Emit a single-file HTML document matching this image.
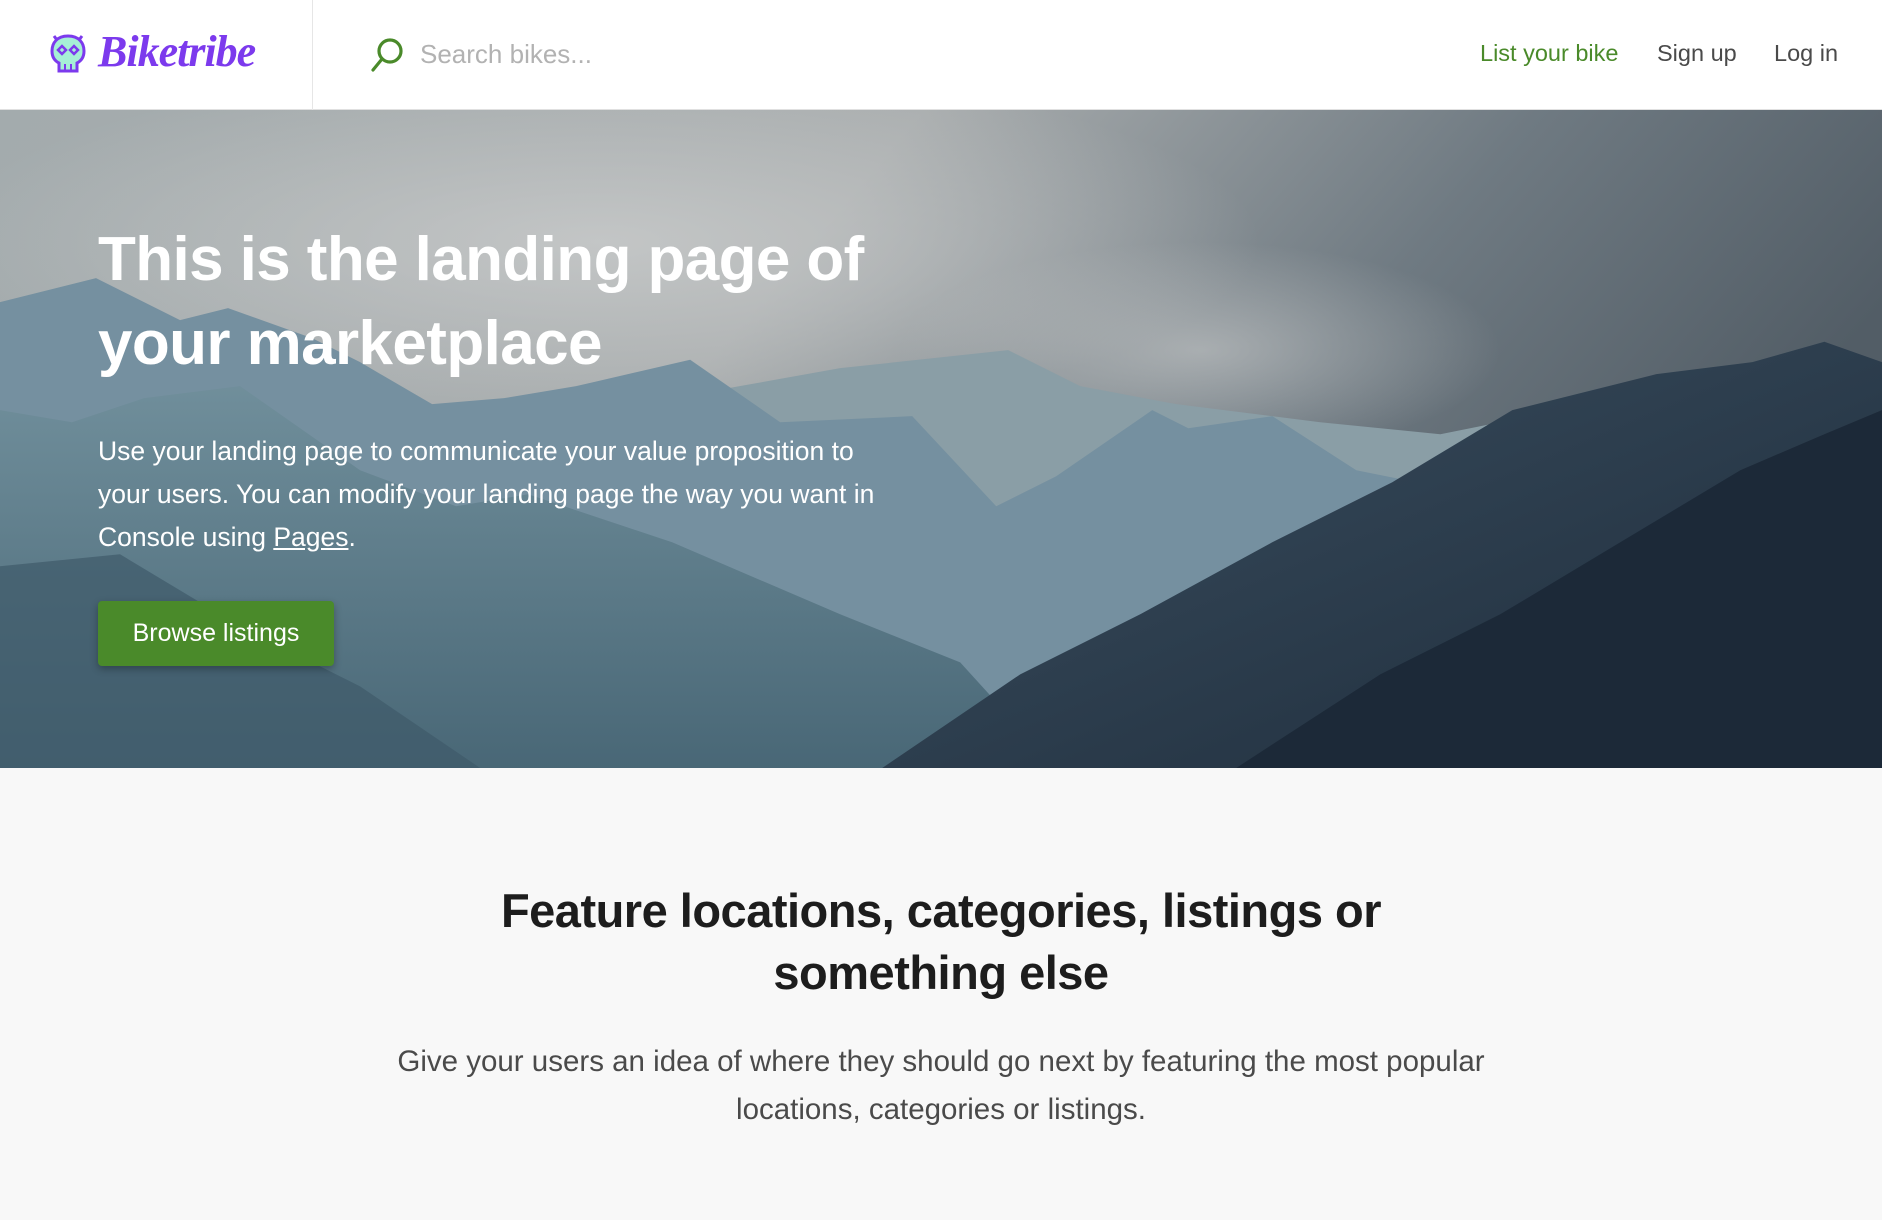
<!DOCTYPE html>
<html><head><meta charset="utf-8"><style>
*{margin:0;padding:0;box-sizing:border-box}
body{width:1882px;height:1220px;overflow:hidden;background:#f8f8f8;font-family:"Liberation Sans",sans-serif;position:relative}
.hdr{position:absolute;left:0;top:0;width:1882px;height:110px;background:#fff;border-bottom:1px solid #e0e0e0}
.div{position:absolute;left:312px;top:0;width:1px;height:110px;background:#e6e6e6}
.logo{position:absolute;left:98px;top:26px;font-family:"Liberation Serif",serif;font-style:italic;font-weight:bold;font-size:44px;color:#7c3aed;letter-spacing:-1px}
.search{position:absolute;left:420px;top:39px;font-size:26px;color:#b2b2b2}
.nav{position:absolute;top:40px;font-size:23.5px;color:#4a4a4a}
.hero{position:absolute;left:0;top:110px;width:1882px;height:658px;overflow:hidden}
h1{position:absolute;left:98px;color:#fff;font-size:62px;line-height:84px;font-weight:bold;letter-spacing:-.6px;width:900px}
.p{position:absolute;left:98px;color:#fff;font-size:26.5px;line-height:43px;width:810px}
.btn{position:absolute;left:98px;width:236px;height:65px;background:#4a8a2a;border-radius:4px;color:#fff;font-size:25px;text-align:center;line-height:65px;box-shadow:0 3px 8px rgba(0,0,0,.3)}
h2{position:absolute;left:0;width:1882px;top:880px;text-align:center;font-size:47px;line-height:62px;color:#1d1d1d;font-weight:bold;letter-spacing:-.5px}
.sub{position:absolute;left:0;width:1882px;top:1038px;text-align:center;font-size:29.5px;line-height:48px;color:#4a4a4a}
</style></head><body>
<div class="hdr">
<svg style="position:absolute;left:48px;top:32px" width="40" height="44" viewBox="0 0 40 44"><path d="M6 4l3 4M34 4l-3 4" stroke="#7c3aed" stroke-width="3"/><path d="M20 4C9 4 4 11 4 19c0 6 3 10 7 12v8h18v-8c4-2 7-6 7-12C36 11 31 4 20 4z" fill="#a6f0d6" stroke="#7c3aed" stroke-width="3"/><path d="M10 18l4-4 4 4-4 4zM22 18l4-4 4 4-4 4z" fill="none" stroke="#7c3aed" stroke-width="2.5"/><path d="M17 32v7M23 32v7" stroke="#7c3aed" stroke-width="2"/></svg>
<div class="logo">Biketribe</div>
<div class="div"></div>
<svg style="position:absolute;left:370px;top:37px" width="34" height="36" viewBox="0 0 34 36"><circle cx="20" cy="14" r="11" fill="none" stroke="#4a8a2a" stroke-width="3.2"/><path d="M12 22L3 33" stroke="#4a8a2a" stroke-width="3.2" stroke-linecap="round"/></svg>
<div class="search">Search bikes...</div>
<div class="nav" style="left:1480px;color:#4a8a2a">List your bike</div>
<div class="nav" style="left:1657px">Sign up</div>
<div class="nav" style="left:1774px">Log in</div>
</div>
<div class="hero">
<svg width="1882" height="658" viewBox="0 0 1568 548" preserveAspectRatio="none">
<defs><linearGradient id="sky" x1="0" y1="0" x2="1" y2="0.3"><stop offset="0" stop-color="#a3abad"/><stop offset=".45" stop-color="#a9adae"/><stop offset=".75" stop-color="#6f7a82"/><stop offset="1" stop-color="#525d66"/></linearGradient>
<linearGradient id="m1" x1="0" y1="0" x2="0" y2="1"><stop offset="0" stop-color="#6f8e9a"/><stop offset="1" stop-color="#41606f"/></linearGradient>
<linearGradient id="m2" x1="0" y1="0" x2="1" y2="1"><stop offset="0" stop-color="#3b4f60"/><stop offset="1" stop-color="#1e2c3b"/></linearGradient>
<radialGradient id="cl" cx=".5" cy=".5" r=".5"><stop offset="0" stop-color="#c8caca" stop-opacity=".85"/><stop offset="1" stop-color="#c8caca" stop-opacity="0"/></radialGradient></defs>
<rect width="1568" height="548" fill="url(#sky)"/>
<ellipse cx="500" cy="110" rx="550" ry="150" fill="url(#cl)"/>
<ellipse cx="1000" cy="200" rx="250" ry="90" fill="url(#cl)" opacity=".7"/>
<path d="M560 548L560 240L700 215L840 200L900 230L980 245L1100 260L1200 270L1300 250L1400 262L1568 240V548z" fill="#8a9ea6"/>
<path d="M0 548V160L80 140L150 175L190 165L260 190L300 210L360 245L420 240L480 230L575 208L650 260L760 255L830 330L880 305L960 250L990 265L1060 255L1130 300L1180 310L1250 300L1300 255L1340 265L1400 300L1568 260V548z" fill="#7590a0"/>
<path d="M0 548V250L60 260L120 240L200 230L300 300L380 330L440 320L560 360L700 420L800 460L880 548z" fill="url(#m1)" opacity=".85"/>
<path d="M0 548V380L100 370L200 430L300 480L400 548z" fill="#3f5a6a" opacity=".7"/>
<path d="M735 548L850 470L950 420L1060 360L1160 310L1260 250L1380 220L1460 210L1520 193L1568 210V548z" fill="url(#m2)"/>
<path d="M1030 548L1150 470L1250 420L1350 360L1450 300L1520 270L1568 250V548z" fill="#1c2938"/>
</svg>
<h1 style="top:108px">This is the landing page of your marketplace</h1>
<div class="p" style="top:320px">Use your landing page to communicate your value proposition to your users. You can modify your landing page the way you want in Console using <u>Pages</u>.</div>
<div class="btn" style="top:491px">Browse listings</div>
</div>
<h2>Feature locations, categories, listings or<br>something else</h2>
<div class="sub">Give your users an idea of where they should go next by featuring the most popular<br>locations, categories or listings.</div>
</body></html>
